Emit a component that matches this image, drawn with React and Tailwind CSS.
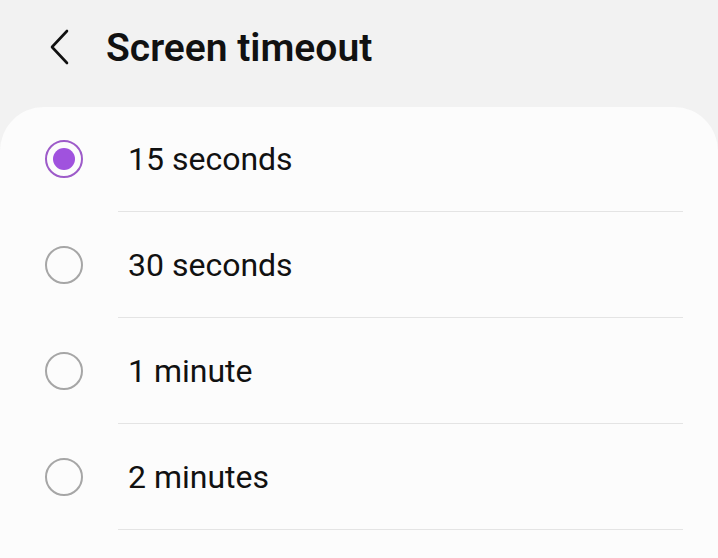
import React, { useState } from 'react';

const options = ['15 seconds', '30 seconds', '1 minute', '2 minutes'];

const Radio = ({ checked }) => (
    <div
        className={`w-[38px] h-[38px] shrink-0 rounded-full border-2 flex items-center justify-center ${
            checked ? 'border-[#9d5bc9]' : 'border-[#a6a6a6]'
        }`}
    >
        {checked && <div className="w-[22px] h-[22px] rounded-full bg-[#a052de]"></div>}
    </div>
);

const App = () => {
    const [selected, setSelected] = useState(0);

    return (
        <div
            className="w-[718px] h-[558px] bg-[#f2f2f2] flex flex-col overflow-hidden"
            style={{ fontFamily: 'Roboto, "Noto Sans", sans-serif' }}
        >
            {/* Header */}
            <div className="h-[107px] shrink-0 flex items-start pt-[27px]">
                <button className="ml-[44px] w-[30px] h-[40px] flex items-center justify-center text-[#111]">
                    <svg width="22" height="36" viewBox="0 0 22 36" fill="none">
                        <path d="M19 2 L4 18 L19 34" stroke="currentColor" strokeWidth="2.6" strokeLinecap="round" strokeLinejoin="round" />
                    </svg>
                </button>
                <h1 className="ml-[32px] mt-[1px] text-[39px] leading-[40px] font-semibold text-[#111]">
                    Screen timeout
                </h1>
            </div>

            {/* Options card */}
            <div className="flex-1 bg-[#fcfcfc] rounded-t-[44px]">
                {options.map((label, i) => (
                    <div key={label} onClick={() => setSelected(i)} className="cursor-pointer">
                        <div className="h-[104px] flex items-center pl-[45px]">
                            <Radio checked={selected === i} />
                            <span className="ml-[45px] text-[32px] text-[#111] leading-none">{label}</span>
                        </div>
                        <div className="ml-[118px] mr-[35px] h-px bg-[#e4e4e4] mb-px"></div>
                    </div>
                ))}
            </div>
        </div>
    );
};

export default App;
